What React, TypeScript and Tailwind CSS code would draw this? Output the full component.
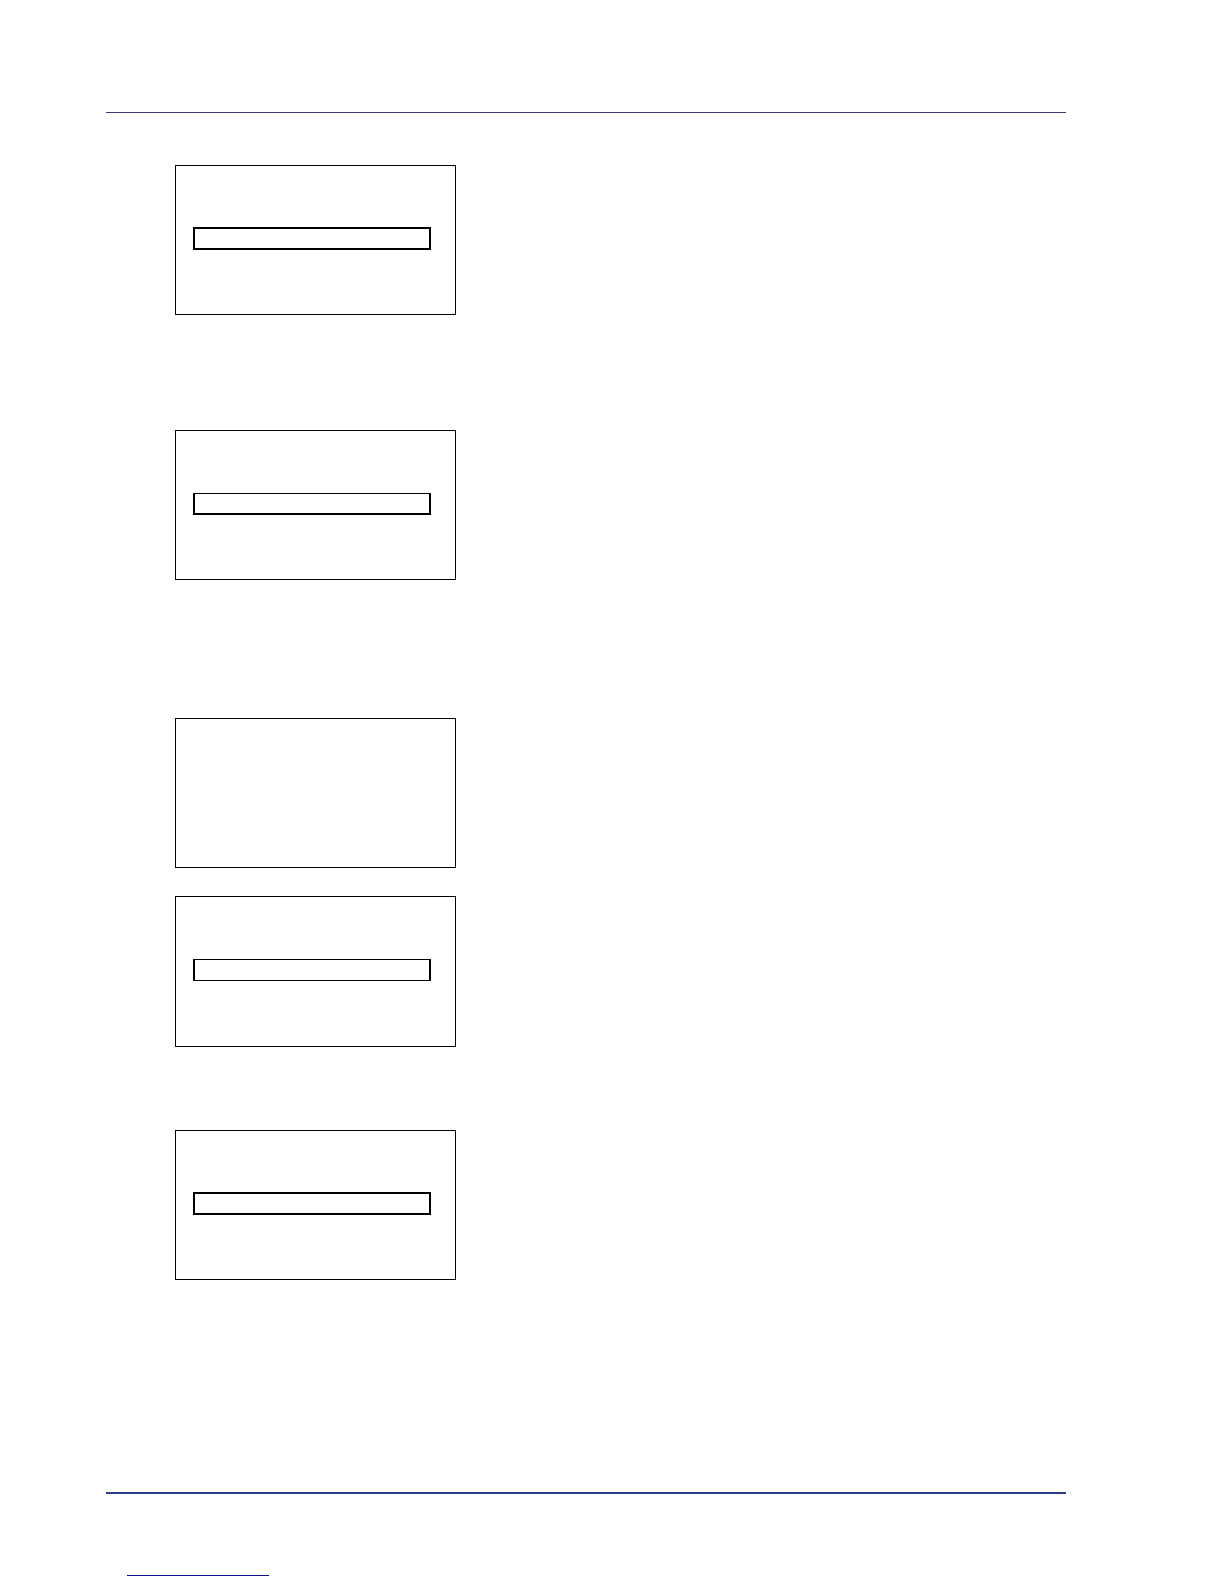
type ScreenProps = {
  className: string;
  field?: string;
};

// An outlined display panel, optionally holding one outlined entry field.
function Screen({ className, field }: ScreenProps) {
  return (
    <section className={`flex w-[281px] flex-col border border-black px-[17px] ${className}`}>
      {field && <div className={`w-[238px] border-black ${field}`} />}
    </section>
  );
}

export default function App() {
  return (
    <div className="flex min-h-screen flex-col bg-white pt-28 pr-[158px] pb-2 pl-[106px]">
      <header className="border-t border-[#403d76]" />

      <main className="flex flex-col pt-[52px] pl-[69px]">
        <Screen className="h-[150px] pt-[61px]" field="h-[23px] border-2" />
        <Screen className="mt-[115px] h-[150px] pt-[62px]" field="h-[22px] border-2 border-t" />
        <Screen className="mt-[138px] h-[150px]" />
        <Screen className="mt-7 h-[151px] pt-[62px]" field="h-[22px] border-x-2 border-y" />
        <Screen className="mt-[83px] h-[150px] pt-[61px]" field="h-[23px] border-2" />
      </main>

      <footer className="mt-[212px] border-t-2 border-[#2b3a8a] pt-[81px] pl-[21px]">
        <div className="w-[142px] border-t border-[#10108c]" />
      </footer>
    </div>
  );
}
